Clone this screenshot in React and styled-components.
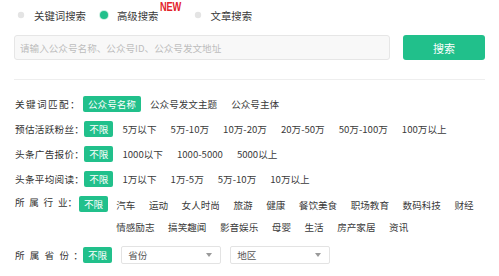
import React from 'react';
import styled, { createGlobalStyle } from 'styled-components';

const GREEN = '#21c08b';

const GlobalStyle = createGlobalStyle`
  html, body { margin: 0; padding: 0; background: #fff; }
  body { font-family: "Noto Sans CJK SC", "Noto Sans", sans-serif; color: #444; }
  * { box-sizing: border-box; }
`;

const Page = styled.div`
  width: 499px;
  height: 276px;
  padding: 0 14px;
  overflow: hidden;
`;

const RadioRow = styled.div`
  display: flex;
  align-items: center;
  height: 30px;
  padding-left: 3px;
`;

const RadioItem = styled.label`
  position: relative;
  display: flex;
  align-items: center;
  gap: 9px;
  margin-left: ${p => p.$ml || 0}px;
  padding-right: ${p => p.$pr || 0}px;
  font-size: 10.4px;
  line-height: 15px;
  color: #3a3a3a;
`;

const Dot = styled.span`
  width: 8px;
  height: 8px;
  border-radius: 50%;
  background: ${p => (p.$on ? GREEN : '#e4e4e4')};
  box-shadow: ${p => (p.$on ? '0 0 0 1px #c9efe0' : 'none')};
  transform: ${p => (p.$on ? 'none' : 'scale(0.8)')};
`;

const Badge = styled.span`
  position: absolute;
  left: 60px;
  top: -7px;
  font-family: "Liberation Sans", Arial, sans-serif;
  font-weight: bold;
  font-size: 12.5px;
  line-height: 12px;
  color: #e3232a;
  transform: scaleX(0.74);
  transform-origin: left center;
  letter-spacing: -0.3px;
`;

const SearchRow = styled.div`
  display: flex;
  gap: 13px;
  margin-top: 5px;
  height: 25px;
`;

const SearchInput = styled.input`
  flex: 1;
  height: 25px;
  border: 1px solid #e6e6e6;
  background: #f8f8f8;
  border-radius: 3px;
  padding: 0 5px;
  font-family: inherit;
  font-size: 9.6px;
  outline: none;
  &::placeholder { color: #bdbdbd; }
`;

const SearchButton = styled.button`
  width: 82px;
  height: 25px;
  border: none;
  border-radius: 3px;
  background: ${GREEN};
  color: #fff;
  font-family: inherit;
  font-size: 11px;
  padding: 0;
`;

const Divider = styled.div`
  margin-top: 19px;
  height: 1px;
  background: #eeeeee;
`;

const Filters = styled.div`
  display: flex;
  flex-direction: column;
  gap: 9px;
  margin-top: 16px;
  padding-left: 1px;
`;

const FilterRow = styled.div`
  display: flex;
  align-items: ${p => (p.$top ? 'flex-start' : 'center')};
  min-height: 16px;
`;

const Label = styled.div`
  flex: 0 0 ${p => p.$w}px;
  display: flex;
  font-size: 9.6px;
  line-height: ${p => p.$lh || 16}px;
  color: #333;
  white-space: nowrap;
`;

const Chars = styled.span`
  letter-spacing: ${p => p.$ls || 0}px;
`;

const Options = styled.div`
  display: flex;
  align-items: center;
  gap: 4px;
`;

const Option = styled.span`
  display: inline-block;
  height: ${p => p.$h || 16}px;
  line-height: ${p => p.$h || 16}px;
  padding: 0 5px;
  border-radius: 2px;
  font-size: 9.6px;
  white-space: nowrap;
  margin-right: ${p => p.$mr || 0}px;
  background: ${p => (p.$active ? GREEN : 'transparent')};
  color: ${p => (p.$active ? '#fff' : '#3a3a3a')};
`;

const IndustryList = styled.div`
  flex: 1;
  display: flex;
  flex-wrap: wrap;
  column-gap: 3.5px;
  row-gap: 3px;
`;

const Select = styled.div`
  width: 100px;
  height: 18px;
  border: 1px solid #e3e3e3;
  border-radius: 2px;
  background: #fff;
  display: flex;
  align-items: center;
  justify-content: space-between;
  padding: 0 8px 0 6px;
  font-size: 9.6px;
  color: #555;
  margin-right: ${p => p.$mr || 0}px;
`;

const Arrow = () => (
  <svg width="6" height="4" viewBox="0 0 6 4">
    <polygon points="0,0 6,0 3,4" fill="#9a9a9a" />
  </svg>
);

const fans = ['5万以下', '5万-10万', '10万-20万', '20万-50万', '50万-100万', '100万以上'];
const price = ['1000以下', '1000-5000', '5000以上'];
const reads = ['1万以下', '1万-5万', '5万-10万', '10万以上'];
const industries = [
  '汽车', '运动', '女人时尚', '旅游', '健康', '餐饮美食', '职场教育', '数码科技', '财经',
  '情感励志', '搞笑趣闻', '影音娱乐', '母婴', '生活', '房产家居', '资讯',
];

export default function App() {
  return (
    <Page>
      <GlobalStyle />
      <RadioRow>
        <RadioItem><Dot />关键词搜索</RadioItem>
        <RadioItem $ml={14} $pr={24}><Dot $on />高级搜索<Badge>NEW</Badge></RadioItem>
        <RadioItem $ml={11}><Dot />文章搜索</RadioItem>
      </RadioRow>

      <SearchRow>
        <SearchInput placeholder="请输入公众号名称、公众号ID、公众号发文地址" />
        <SearchButton>搜索</SearchButton>
      </SearchRow>

      <Divider />

      <Filters>
        <FilterRow>
          <Label $w={68}><Chars $ls={1.4}>关键词匹配：</Chars></Label>
          <Options>
            <Option $active>公众号名称</Option>
            <Option>公众号发文主题</Option>
            <Option>公众号主体</Option>
          </Options>
        </FilterRow>

        <FilterRow>
          <Label $w={68}><Chars $ls={0.3}>预估活跃粉丝：</Chars></Label>
          <Options>
            <Option $active>不限</Option>
            {fans.map(t => <Option key={t}>{t}</Option>)}
          </Options>
        </FilterRow>

        <FilterRow>
          <Label $w={68}><Chars $ls={0.3}>头条广告报价：</Chars></Label>
          <Options>
            <Option $active>不限</Option>
            {price.map(t => <Option key={t}>{t}</Option>)}
          </Options>
        </FilterRow>

        <FilterRow>
          <Label $w={68}><Chars $ls={0.3}>头条平均阅读：</Chars></Label>
          <Options>
            <Option $active>不限</Option>
            {reads.map(t => <Option key={t}>{t}</Option>)}
          </Options>
        </FilterRow>

        <FilterRow $top>
          <Label $w={64} $lh={12}><Chars $ls={4.7}>所属行</Chars>业：</Label>
          <Option $active $mr={3}>不限</Option>
          <IndustryList>
            {industries.map(t => <Option key={t} $h={19}>{t}</Option>)}
          </IndustryList>
        </FilterRow>

        <FilterRow>
          <Label $w={68}><Chars $ls={5.2}>所属省</Chars><Chars $ls={4.2}>份</Chars>：</Label>
          <Option $active $mr={9}>不限</Option>
          <Select $mr={9}>省份<Arrow /></Select>
          <Select>地区<Arrow /></Select>
        </FilterRow>
      </Filters>
    </Page>
  );
}
